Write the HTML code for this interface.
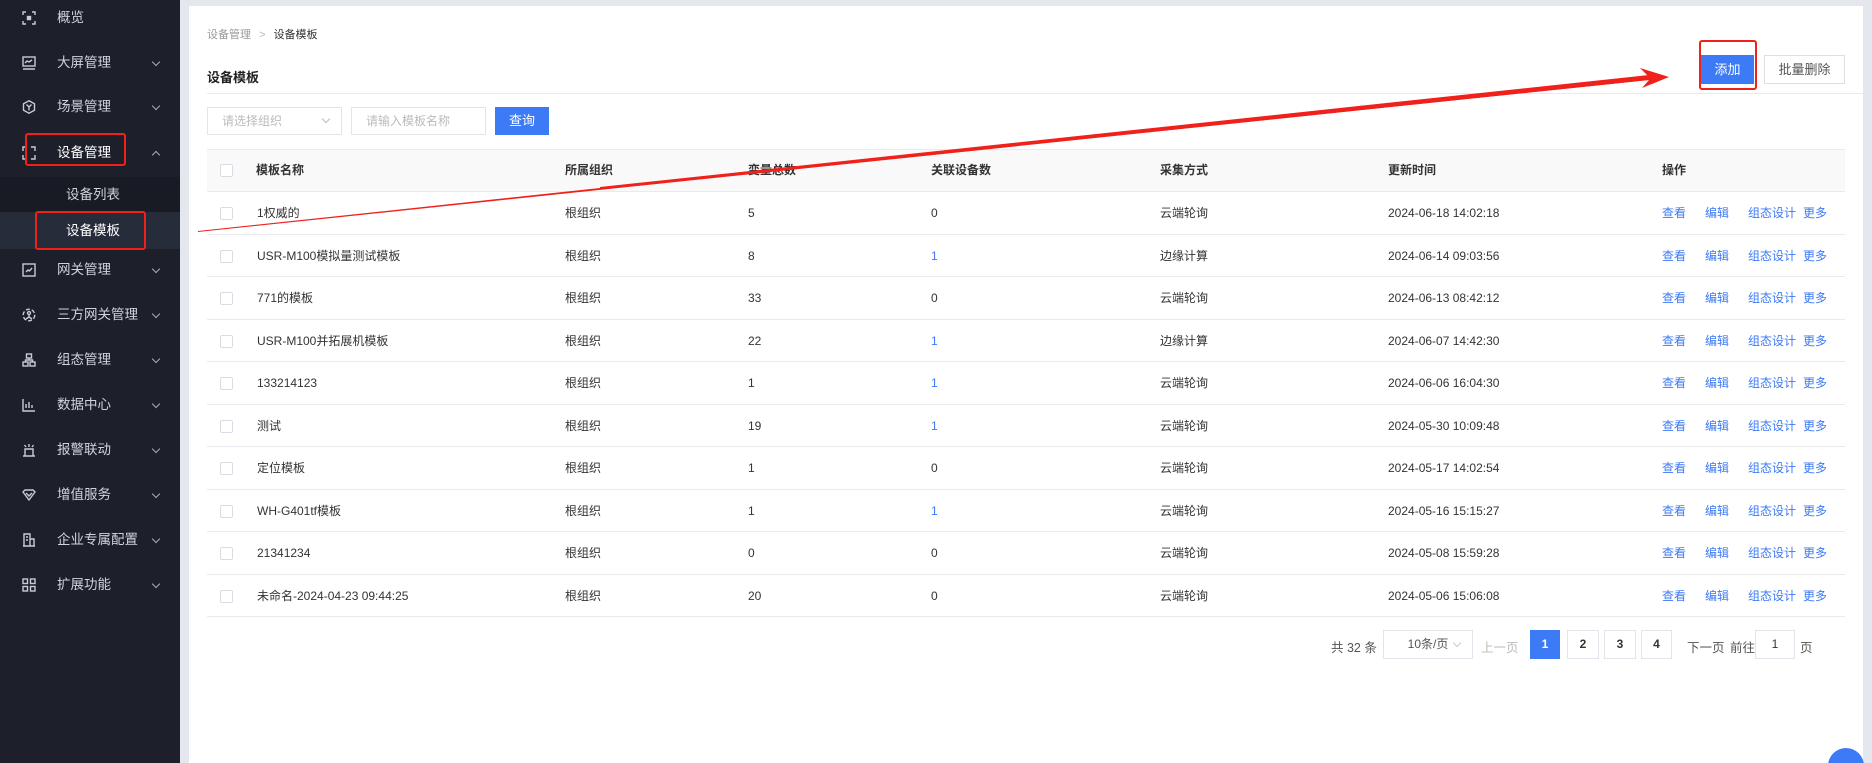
<!DOCTYPE html>
<html><head><meta charset="utf-8"><style>
*{margin:0;padding:0;box-sizing:border-box}
html,body{width:1872px;height:763px;overflow:hidden}
body{background:#e4e7ee;font-family:"Liberation Sans","Noto Sans CJK SC",sans-serif;position:relative;color:#333}
.sb{position:absolute;left:0;top:0;width:180px;height:763px;background:#1d202b}
.mi{position:absolute;left:0;width:180px;height:36px;line-height:36px;color:#d0d3da;font-size:13.5px}
.mi .t{position:absolute;left:57px}
.mi .ic{position:absolute;left:22px;top:11px;width:14px;height:14px}
.mi .ch{position:absolute;left:153px;top:14px;width:6px;height:6px;border-right:1.3px solid #aab;border-bottom:1.3px solid #aab;transform:rotate(45deg)}
.mi .ch.up{transform:rotate(-135deg);top:17px}
.card{position:absolute;left:189px;top:6px;width:1674px;height:757px;background:#fff}
.abs{position:absolute}
.row{position:absolute;left:207px;width:1638px;border-bottom:1px solid #e8eaef;font-size:12px;color:#333}
.row span{position:absolute;top:0}
.cb{position:absolute;left:13px;width:13px;height:13px;border:1px solid #d9dce3;border-radius:2px;background:#fff}
.blue{color:#3d7af5}
.pg{position:absolute;top:630px;height:29px;border:1px solid #e1e4ea;text-align:center;line-height:27px;font-size:12px;color:#333}
</style></head><body>
<div class="sb">
 <div class="mi" style="top:0"><svg class="ic" viewBox="0 0 14 14" fill="none" stroke="#c8ccd4" stroke-width="1.4"><path d="M1 4V1h3M10 1h3v3M13 10v3h-3M4 13H1v-3"/><rect x="5.5" y="5.5" width="3" height="3" fill="#c8ccd4"/></svg><span class="t">概览</span></div>
 <div class="mi" style="top:45px"><svg class="ic" viewBox="0 0 14 14" fill="none" stroke="#c8ccd4" stroke-width="1.4"><rect x="1" y="1" width="12" height="9"/><path d="M3 7l2-2 2 1 3-2M1 13h12"/></svg><span class="t">大屏管理</span><i class="ch"></i></div>
 <div class="mi" style="top:89px"><svg class="ic" viewBox="0 0 14 14" fill="none" stroke="#c8ccd4" stroke-width="1.4"><path d="M7 0.8l5.5 3v6.4L7 13.2 1.5 10.2V3.8z M4.5 4.5L7 7l2.5-2.5M7 7v3.5"/></svg><span class="t">场景管理</span><i class="ch"></i></div>
 <div class="mi" style="top:135px;color:#fff"><svg class="ic" viewBox="0 0 14 14" fill="none" stroke="#c8ccd4" stroke-width="1.4"><path d="M1 5V1h4M9 1h4v4M13 9v4H9M5 13H1V9"/></svg><span class="t">设备管理</span><i class="ch up"></i></div>
 <div class="abs" style="left:0;top:177px;width:180px;height:35px;background:#181b23;color:#d0d3da;font-size:13.5px;line-height:35px;padding-left:66px">设备列表</div>
 <div class="abs" style="left:0;top:212px;width:180px;height:37px;background:#272c3a;color:#fff;font-size:13.5px;line-height:37px;padding-left:66px">设备模板</div>
 <div class="mi" style="top:252px"><svg class="ic" viewBox="0 0 14 14" fill="none" stroke="#c8ccd4" stroke-width="1.4"><rect x="1" y="1" width="12" height="12"/><path d="M4 9l2-2 1.5 1L10 5"/></svg><span class="t">网关管理</span><i class="ch"></i></div>
 <div class="mi" style="top:297px"><svg class="ic" viewBox="0 0 14 14" fill="none" stroke="#c8ccd4" stroke-width="1.4"><circle cx="7" cy="7" r="5.8" stroke-dasharray="4 2"/><circle cx="7" cy="5" r="1.5"/><path d="M7 7v2l-3 2M7 9l3 2"/></svg><span class="t">三方网关管理</span><i class="ch"></i></div>
 <div class="mi" style="top:342px"><svg class="ic" viewBox="0 0 14 14" fill="none" stroke="#c8ccd4" stroke-width="1.4"><rect x="4.5" y="1" width="5" height="4"/><rect x="1" y="9" width="5" height="4"/><rect x="8" y="9" width="5" height="4"/><path d="M7 5v2M3.5 9V7h7v2"/></svg><span class="t">组态管理</span><i class="ch"></i></div>
 <div class="mi" style="top:387px"><svg class="ic" viewBox="0 0 14 14" fill="none" stroke="#c8ccd4" stroke-width="1.4"><path d="M1 1v12h12M4 10V6M7 10V4M10 10V7"/></svg><span class="t">数据中心</span><i class="ch"></i></div>
 <div class="mi" style="top:432px"><svg class="ic" viewBox="0 0 14 14" fill="none" stroke="#c8ccd4" stroke-width="1.4"><path d="M1 13h12M3 13V6h8v7M7 1v3M2.5 2l1.5 2M11.5 2L10 4"/></svg><span class="t">报警联动</span><i class="ch"></i></div>
 <div class="mi" style="top:477px"><svg class="ic" viewBox="0 0 14 14" fill="none" stroke="#c8ccd4" stroke-width="1.4"><path d="M1 4l2-2h8l2 2-6 8z M4 5l3 3 3-3"/></svg><span class="t">增值服务</span><i class="ch"></i></div>
 <div class="mi" style="top:522px"><svg class="ic" viewBox="0 0 14 14" fill="none" stroke="#c8ccd4" stroke-width="1.4"><path d="M1 13h12M2 13V1h6v12M8 6h4v7M4 4h2M4 7h2"/></svg><span class="t">企业专属配置</span><i class="ch"></i></div>
 <div class="mi" style="top:567px"><svg class="ic" viewBox="0 0 14 14" fill="none" stroke="#c8ccd4" stroke-width="1.4"><rect x="1" y="1" width="4.5" height="4.5"/><rect x="8.5" y="1" width="4.5" height="4.5"/><rect x="1" y="8.5" width="4.5" height="4.5"/><rect x="8.5" y="8.5" width="4.5" height="4.5"/></svg><span class="t">扩展功能</span><i class="ch"></i></div>
 <div class="abs" style="left:25px;top:133px;width:101px;height:33px;border:2px solid #f0201a;border-radius:3px"></div>
 <div class="abs" style="left:35px;top:211px;width:111px;height:39px;border:2px solid #f0201a;border-radius:3px"></div>
</div>
<div class="card"></div>
<div class="abs" style="left:207px;top:26px;font-size:11px;color:#999">设备管理 <span style="margin:0 5px;color:#bbb">&gt;</span> <span style="color:#333">设备模板</span></div>
<div class="abs" style="left:207px;top:67px;font-size:13px;font-weight:bold;color:#222">设备模板</div>
<div class="abs" style="left:207px;top:93px;width:1656px;height:1px;background:#e8eaef"></div>
<div class="abs" style="left:1701px;top:55px;width:53px;height:29px;background:#3d7af5;color:#fff;font-size:13px;text-align:center;line-height:29px">添加</div>
<div class="abs" style="left:1699px;top:40px;width:58px;height:50px;border:2px solid #f0201a;border-radius:3px"></div>
<div class="abs" style="left:1764px;top:55px;width:81px;height:29px;border:1px solid #dcdfe6;color:#555;font-size:13px;text-align:center;line-height:27px">批量删除</div>
<div class="abs" style="left:207px;top:107px;width:135px;height:28px;border:1px solid #e1e4ea;font-size:12px;color:#bbb;line-height:26px;padding-left:14px">请选择组织<i style="position:absolute;right:12px;top:8px;width:6px;height:6px;border-right:1px solid #bbb;border-bottom:1px solid #bbb;transform:rotate(45deg)"></i></div>
<div class="abs" style="left:351px;top:107px;width:135px;height:28px;border:1px solid #e1e4ea;font-size:12px;color:#bbb;line-height:26px;padding-left:14px">请输入模板名称</div>
<div class="abs" style="left:495px;top:107px;width:54px;height:28px;background:#3d7af5;color:#fff;font-size:13px;text-align:center;line-height:28px">查询</div>
<div class="abs" style="left:207px;top:149px;width:1638px;height:43px;background:#f9f9f9;border-top:1px solid #e8eaef;border-bottom:1px solid #e8eaef;font-size:12px;font-weight:bold;color:#333;line-height:41px">
 <i class="cb" style="top:14px"></i>
 <span class="abs" style="left:49px">模板名称</span><span class="abs" style="left:358px">所属组织</span><span class="abs" style="left:541px">变量总数</span><span class="abs" style="left:724px">关联设备数</span><span class="abs" style="left:953px">采集方式</span><span class="abs" style="left:1181px">更新时间</span><span class="abs" style="left:1455px">操作</span>
</div>
<div id="rows"></div>
<div class="abs" style="left:1331px;top:637px;font-size:12.5px;color:#555">共 32 条</div>
<div class="pg" style="left:1383px;width:90px;color:#555">10条/页<i style="position:absolute;right:12px;top:9px;width:6px;height:6px;border-right:1px solid #ccc;border-bottom:1px solid #ccc;transform:rotate(45deg)"></i></div>
<div class="abs" style="left:1481px;top:637px;font-size:12.5px;color:#bbb">上一页</div>
<div class="pg" style="left:1530px;width:30px;background:#3d7af5;border-color:#3d7af5;color:#fff;font-weight:bold">1</div>
<div class="pg" style="left:1567px;width:32px;font-weight:bold">2</div>
<div class="pg" style="left:1604px;width:32px;font-weight:bold">3</div>
<div class="pg" style="left:1641px;width:31px;font-weight:bold">4</div>
<div class="abs" style="left:1687px;top:637px;font-size:12.5px;color:#555">下一页</div>
<div class="abs" style="left:1730px;top:637px;font-size:12.5px;color:#555">前往</div>
<div class="pg" style="left:1755px;width:40px">1</div>
<div class="abs" style="left:1800px;top:637px;font-size:12.5px;color:#555">页</div>
<div class="abs" style="left:1828px;top:748px;width:36px;height:15px;overflow:hidden"><div style="width:36px;height:36px;border-radius:50%;background:#3d7af5"></div></div>
<svg class="abs" style="left:0;top:0" width="1872" height="763"><polygon points="198,231 1648,76 1640,68 1669,77 1642,88 1649,80 198,232" fill="#f0201a"/><polygon points="600,187 1649,75 1649,80 600,189" fill="#f0201a"/></svg>
<script>
var d=[["1权威的","5","0","云端轮询","2024-06-18 14:02:18"],["USR-M100模拟量测试模板","8","1","边缘计算","2024-06-14 09:03:56"],["771的模板","33","0","云端轮询","2024-06-13 08:42:12"],["USR-M100并拓展机模板","22","1","边缘计算","2024-06-07 14:42:30"],["133214123","1","1","云端轮询","2024-06-06 16:04:30"],["测试","19","1","云端轮询","2024-05-30 10:09:48"],["定位模板","1","0","云端轮询","2024-05-17 14:02:54"],["WH-G401tf模板","1","1","云端轮询","2024-05-16 15:15:27"],["21341234","0","0","云端轮询","2024-05-08 15:59:28"],["未命名-2024-04-23 09:44:25","20","0","云端轮询","2024-05-06 15:06:08"]];
var h="";d.forEach(function(r,i){var t=192+i*42.5;h+='<div class="row" style="top:'+t+'px;height:42.5px;line-height:42px"><i class="cb" style="top:15px"></i><span style="left:50px">'+r[0]+'</span><span style="left:358px">根组织</span><span style="left:541px">'+r[1]+'</span><span style="left:724px" class="'+(r[2]=="1"?"blue":"")+'">'+r[2]+'</span><span style="left:953px">'+r[3]+'</span><span style="left:1181px">'+r[4]+'</span><span class="blue" style="left:1455px">查看</span><span class="blue" style="left:1498px">编辑</span><span class="blue" style="left:1541px">组态设计</span><span class="blue" style="left:1596px">更多</span></div>'});
document.getElementById("rows").innerHTML=h;
</script>
</body></html>
